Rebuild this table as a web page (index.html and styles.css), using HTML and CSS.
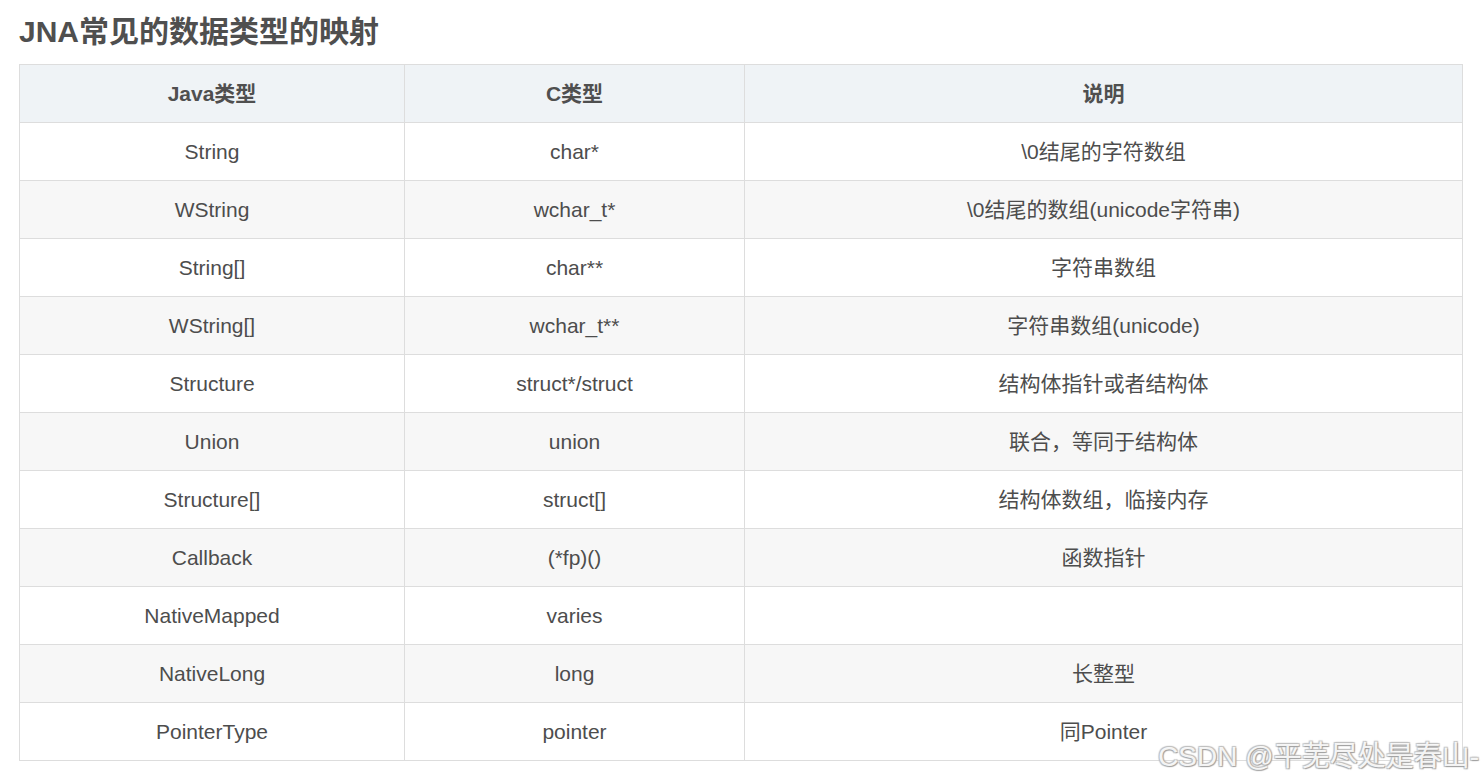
FILE: index.html
```html
<!DOCTYPE html>
<html lang="zh-CN">
<head>
<meta charset="utf-8">
<title>JNA常见的数据类型的映射</title>
<link rel="stylesheet" href="styles.css">
</head>
<body>
<div class="page">
  <h1 class="title">JNA常见的数据类型的映射</h1>
  <table class="map">
    <colgroup>
      <col class="c1"><col class="c2"><col class="c3">
    </colgroup>
    <thead>
      <tr><th>Java类型</th><th>C类型</th><th>说明</th></tr>
    </thead>
    <tbody>
      <tr><td>String</td><td>char*</td><td>\0结尾的字符数组</td></tr>
      <tr><td>WString</td><td>wchar_t*</td><td>\0结尾的数组(unicode字符串)</td></tr>
      <tr><td>String[]</td><td>char**</td><td>字符串数组</td></tr>
      <tr><td>WString[]</td><td>wchar_t**</td><td>字符串数组(unicode)</td></tr>
      <tr><td>Structure</td><td>struct*/struct</td><td>结构体指针或者结构体</td></tr>
      <tr><td>Union</td><td>union</td><td>联合，等同于结构体</td></tr>
      <tr><td>Structure[]</td><td>struct[]</td><td>结构体数组，临接内存</td></tr>
      <tr><td>Callback</td><td>(*fp)()</td><td>函数指针</td></tr>
      <tr><td>NativeMapped</td><td>varies</td><td></td></tr>
      <tr><td>NativeLong</td><td>long</td><td>长整型</td></tr>
      <tr><td>PointerType</td><td>pointer</td><td>同Pointer</td></tr>
    </tbody>
  </table>
  <div class="watermark">CSDN @平芜尽处是春山-</div>
</div>
</body>
</html>
```

FILE: styles.css
```css
html, body {
  margin: 0;
  padding: 0;
  background: #fff;
}
body {
  font-family: "Liberation Sans", Arial, "Noto Sans CJK SC", sans-serif;
  color: #4d4d4d;
}
.page {
  position: relative;
  width: 1483px;
  height: 784px;
  padding: 12px 0 0 19px;
  box-sizing: border-box;
  overflow: hidden;
}
.title {
  margin: 0 0 12px 0;
  font-size: 30px;
  line-height: 40px;
  font-weight: bold;
  color: #4f4f4f;
}
.map {
  border-collapse: collapse;
  width: 1443px;
  table-layout: fixed;
  font-size: 21px;
}
.c1 { width: 385px; }
.c2 { width: 340px; }
.c3 { width: 718px; }
.map th, .map td {
  border: 1px solid #ddd;
  height: 58px;
  padding: 0 8px;
  text-align: center;
  vertical-align: middle;
  line-height: 24px;
  box-sizing: border-box;
}
.map th {
  background: #eff3f6;
  font-weight: bold;
  color: #4f4f4f;
}
.map tbody tr:nth-child(even) td {
  background: #f7f7f7;
}
.watermark {
  position: absolute;
  right: 4px;
  top: 739px;
  font-size: 28px;
  line-height: 36px;
  white-space: nowrap;
  color: rgba(255, 255, 255, 0.9);
  text-shadow: 1px 1px 1px #a0a0a0, -1px -1px 1px #c0c0c0, 1px -1px 1px #c0c0c0, -1px 1px 1px #c0c0c0;
}
```
